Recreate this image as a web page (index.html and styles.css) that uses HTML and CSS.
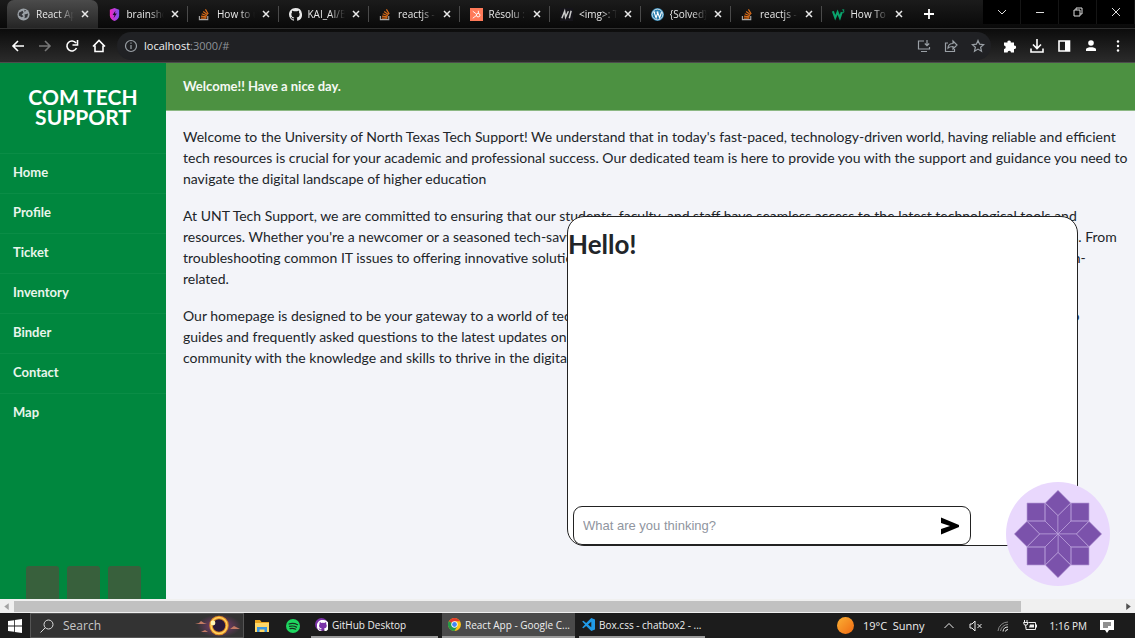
FILE: index.html
```html
<!DOCTYPE html>
<html lang="en">
<head>
<meta charset="utf-8">
<meta name="viewport" content="width=device-width, initial-scale=1">
<title>React App</title>
<link rel="stylesheet" href="styles.css">
</head>
<body>
<svg class="defs" aria-hidden="true">
  <defs>
    <symbol id="stack" viewBox="0 0 14 14"><path d="M1.5 8.500v4h9v-4" fill="none" stroke="#aaa" stroke-width="1.200"/><path d="M3 10.800h6M3.200 8.700l6 .8M4 6.200l5.600 2.100M5.600 3.700l4.700 3.600M8 1.500l3 5" fill="none" stroke="#d96c1a" stroke-width="1.300"/></symbol>
    <symbol id="cat" viewBox="0 0 16 16"><path fill="currentColor" d="M8 0C3.580 0 0 3.580 0 8c0 3.540 2.290 6.530 5.470 7.590.4.070.55-.17.55-.38v-1.490c-2.230.49-2.700-.94-2.700-.94-.36-.92-.89-1.170-.89-1.170-.73-.5.050-.49.050-.49.810.060 1.230.830 1.230.830.720 1.230 1.880.87 2.330.66.070-.52.280-.87.510-1.070-1.780-.2-3.640-.89-3.640-3.950 0-.87.310-1.590.820-2.150-.08-.2-.36-1.020.080-2.120 0 0 .67-.21 2.200.82a7.600 7.600 0 0 1 4 0c1.530-1.040 2.200-.82 2.200-.82.44 1.100.16 1.920.080 2.120.51.560.820 1.270.820 2.150 0 3.070-1.870 3.750-3.650 3.950.29.250.54.730.54 1.480v2.190c0 .21.150.46.550.38A8 8 0 0 0 8 0z"/></symbol>
    <symbol id="x" viewBox="0 0 10 10"><path d="M2 2l6 6M8 2l-6 6" stroke="currentColor" stroke-width="1.500"/></symbol>
  </defs>
</svg>

<header class="browser">
  <div class="tabstrip">
    <div class="tabs">
      <div class="tab active"><svg class="fav" viewBox="0 0 14 14"><circle cx="7" cy="7" r="6.500" fill="#9aa0a6"/><path d="M2 5l4-2 1 2-2 2 2 2-2 1-3-2zM8 7l4-1-1 4-3 1 .5-2zM8 2l2 1-2 1z" fill="#35363a"/></svg><span>React App</span><button aria-label="Close tab"><svg><use href="#x"/></svg></button></div>
      <div class="tab"><svg class="fav" viewBox="0 0 14 14"><defs><linearGradient id="sh"><stop offset="0" stop-color="#f423c4"/><stop offset="1" stop-color="#7b55ee"/></linearGradient></defs><path d="M7 0l5 2v6c0 3-2.500 5-5 6-2.500-1-5-3-5-6V2z" fill="url(#sh)"/><path d="M8 3L5 7.500h2L6 11l3.500-5h-2z" fill="#180d28"/></svg><span>brainshop</span><button aria-label="Close tab"><svg><use href="#x"/></svg></button></div>
      <div class="tab"><svg class="fav"><use href="#stack"/></svg><span>How to use</span><button aria-label="Close tab"><svg><use href="#x"/></svg></button></div>
      <div class="tab"><svg class="fav"><use href="#cat"/></svg><span>KAI_AI/Box</span><button aria-label="Close tab"><svg><use href="#x"/></svg></button></div>
      <div class="tab"><svg class="fav"><use href="#stack"/></svg><span>reactjs - css</span><button aria-label="Close tab"><svg><use href="#x"/></svg></button></div>
      <div class="tab"><svg class="fav" viewBox="0 0 14 14"><path d="M0 0h14v14H0z" fill="#ff7a59"/><g fill="none" stroke="#fff"><path d="M3 3.500l4 3M3 11l4-3M9 3v3"/><circle cx="8.800" cy="7.700" r="1.900"/></g></svg><span>Résolu : css</span><button aria-label="Close tab"><svg><use href="#x"/></svg></button></div>
      <div class="tab"><svg class="fav" viewBox="0 0 14 14"><path d="M0 0h14v14H0z" fill="#15141a"/><path d="M2 11L5 3.500 6 10l3-6.500M10 11l2-8" fill="none" stroke="#ccc" stroke-width="1.600"/></svg><span>&lt;img&gt;: The</span><button aria-label="Close tab"><svg><use href="#x"/></svg></button></div>
      <div class="tab"><svg class="fav" viewBox="0 0 14 14"><circle cx="7" cy="7" r="7" fill="#2b7fae"/><circle cx="7" cy="7" r="5.800" fill="none" stroke="#fff" stroke-width=".8"/><path d="M2.500 4.500h2M3.300 4.500l2.200 6L7.300 5l2 5.500 2-6M6 4.500h2" fill="none" stroke="#fff" stroke-width="1.200"/></svg><span>{Solved} css</span><button aria-label="Close tab"><svg><use href="#x"/></svg></button></div>
      <div class="tab"><svg class="fav"><use href="#stack"/></svg><span>reactjs - css</span><button aria-label="Close tab"><svg><use href="#x"/></svg></button></div>
      <div class="tab"><svg class="fav" viewBox="0 0 14 14"><path d="M1 3.500l2.500 7 2.500-6 2.500 6 2-6" fill="none" stroke="#0aa36c" stroke-width="2.200"/><path d="M11 2h2l-1 1.500c2 0 1 2-1 1.500" fill="none" stroke="#0aa36c"/></svg><span>How To Css</span><button aria-label="Close tab"><svg><use href="#x"/></svg></button></div>
    </div>
    <button class="newtab" aria-label="New tab"><svg viewBox="0 0 12 12"><path d="M6 1v10M1 6h10" stroke="#fff" stroke-width="1.800"/></svg></button>
    <div class="window-buttons">
      <button aria-label="Search tabs"><svg viewBox="0 0 12 12"><path d="M2 4l4 4 4-4"/></svg></button>
      <button aria-label="Minimize"><svg viewBox="0 0 12 12"><path d="M2 6.500h8"/></svg></button>
      <button aria-label="Restore"><svg viewBox="0 0 12 12"><path d="M2 4h6v6H2zM4 4V2h6v6H8"/></svg></button>
      <button aria-label="Close window"><svg viewBox="0 0 12 12"><path d="M2 2l8 8M10 2l-8 8"/></svg></button>
    </div>
  </div>
  <div class="toolbar">
    <div class="nav-buttons">
      <button aria-label="Back"><svg viewBox="0 0 14 14"><path d="M13 7H2M7 2L2 7l5 5"/></svg></button>
      <button aria-label="Forward" class="dim"><svg viewBox="0 0 14 14"><path d="M1 7h11M7 2l5 5-5 5"/></svg></button>
      <button aria-label="Reload"><svg viewBox="0 0 14 14"><path d="M11.500 9A5 5 0 1 1 11 4M12.500 1v5h-5"/></svg></button>
      <button aria-label="Home page"><svg viewBox="0 0 14 14"><path d="M1 7.500L7 1.500l6 6M3 6.500v6h8v-6"/></svg></button>
    </div>
    <div class="address">
      <svg viewBox="0 0 14 14"><circle cx="7" cy="7" r="5.500"/><path d="M7 6v4M7 3.500v1.200"/></svg>
      <input type="text" aria-label="Address" class="sr">
      <span class="url">localhost<i>:3000/#</i></span>
      <div class="address-actions">
        <button aria-label="Install"><svg viewBox="0 0 14 14"><path d="M7 2H1.500v8h11V8M4 12.500h6M10 1v5M7.800 4.500L10 6.700l2.200-2.200"/></svg></button>
        <button aria-label="Share"><svg viewBox="0 0 14 14"><path d="M4 4H1.500v8.500h9V10M4 9c0-3 2-4.500 5-4.500V2l4 4-4 4V7.500C7 7.500 5 8 4 9z"/></svg></button>
        <button aria-label="Bookmark"><svg viewBox="0 0 14 14"><path d="M7 1.500l1.600 3.700 4 .4-3 2.600.9 4L7 10.100l-3.500 2.100.9-4-3-2.600 4-.4z"/></svg></button>
      </div>
    </div>
    <div class="extensions">
      <button aria-label="Extensions"><svg viewBox="0 0 14 14"><path class="solid" d="M1 3.500h3.500a1.700 1.700 0 1 1 3.300 0H11v3.200a1.700 1.700 0 1 1 0 3.300v3.500H8a1.700 1.700 0 0 0-3.400 0H1V10a1.700 1.700 0 0 0 0-3.400z"/></svg></button>
      <button aria-label="Downloads"><svg viewBox="0 0 14 14"><path d="M7 0v9M3 5.500l4 4 4-4M1 9.500V13h12V9.500"/></svg></button>
      <button aria-label="Side panel"><svg viewBox="0 0 14 14"><path d="M2 2h10.500v10H2z"/><path class="solid" d="M8 2h5v10H8z"/></svg></button>
      <button aria-label="Account" class="account"><svg viewBox="0 0 14 14"><circle class="solid" cx="7" cy="4" r="2.800"/><path class="solid" d="M2 12V10c1-2.500 9-2.500 10 0v2z"/></svg></button>
      <button aria-label="Menu"><svg viewBox="0 0 14 14"><circle class="solid" cx="7" cy="2.500" r="1.200"/><circle class="solid" cx="7" cy="7" r="1.200"/><circle class="solid" cx="7" cy="11.500" r="1.200"/></svg></button>
    </div>
  </div>
</header>

<div class="app">
  <aside class="sidebar">
    <h1 class="brand">COM TECH SUPPORT</h1>
    <nav class="menu">
      <a href="#">Home</a><a href="#">Profile</a><a href="#">Ticket</a><a href="#">Inventory</a><a href="#">Binder</a><a href="#">Contact</a><a href="#">Map</a>
    </nav>
    <div class="social"><i></i><i></i><i></i></div>
  </aside>
  <main class="main">
    <div class="banner">Welcome!! Have a nice day.</div>
    <div class="copy">
      <p>Welcome to the University of North Texas Tech Support! We understand that in today's fast-paced, technology-driven world, having reliable and efficient<br>tech resources is crucial for your academic and professional success. Our dedicated team is here to provide you with the support and guidance you need to<br>navigate the digital landscape of higher education</p>
      <p>At UNT Tech Support, we are committed to ensuring that our students, faculty, and staff have seamless access to the latest technological tools and<br>resources. Whether you're a newcomer or a seasoned tech-savvy individual, our knowledgeable team is here to help with all your computing needs. From<br>troubleshooting common IT issues to offering innovative solutions, we are your trusted partners on campus and your go-to resource for things tech-<br>related.</p>
      <p>Our homepage is designed to be your gateway to a world of technology resources, support, and services for your campus community. From how-to<br>guides and frequently asked questions to the latest updates on campus technology, we are here to empower the<br>community with the knowledge and skills to thrive in the digital age.</p>
    </div>
  </main>
  <section class="chat" aria-label="Chat">
    <h2>Hello!</h2>
    <form class="ask">
      <input type="text" aria-label="Message" placeholder="What are you thinking?">
      <button type="button" aria-label="Send"><svg viewBox="0 0 20 18"><path d="M1 .5l18 7.500v2L1 17.500v-5.500l9-3-9-3z"/></svg></button>
    </form>
  </section>
  <button class="chat-toggle" aria-label="Toggle chat">
    <svg viewBox="-156 -156 312 312">
      <defs><g id="petal"><path d="M-39-39h-54v-54h54zM0-55l-38-38L0-131l38 38zM0 0l-55 0-38-39h54zM0 0l-39-39v-54L0-55z"/></g></defs>
      <use href="#petal"/><use href="#petal" transform="rotate(90)"/><use href="#petal" transform="rotate(180)"/><use href="#petal" transform="rotate(270)"/>
    </svg>
  </button>
</div>

<div class="scrollbar">
  <svg viewBox="0 0 8 8"><path d="M6 1v6L2 4z" fill="#a3a3a3"/></svg>
  <div class="track"><div class="thumb"></div></div>
  <svg viewBox="0 0 8 8"><path d="M2 1v6l4-3z" fill="#505050"/></svg>
</div>

<footer class="taskbar">
  <button class="start" aria-label="Start"><svg viewBox="0 0 14 14"><path d="M0 2l6-.8v5.400H0zM6.800 1L14 0v6.600H6.800zM0 7.400h6v5.400L0 12zM6.800 7.400H14V14l-7.200-1z" fill="#fff"/></svg></button>
  <label class="search">
    <svg class="lens" viewBox="0 0 14 14"><circle cx="8.500" cy="5.500" r="4.500"/><path d="M5.300 8.700L.5 13.500"/></svg>
    <input type="text" placeholder="Search" aria-label="Search">
    <svg class="eclipse" viewBox="0 0 48 23"><defs><radialGradient id="glow"><stop offset="0" stop-color="#8c3d7c"/><stop offset="1" stop-color="#8c3d7c" stop-opacity="0"/></radialGradient></defs><ellipse cx="26" cy="12" rx="22" ry="11.500" fill="url(#glow)"/><circle cx="26" cy="11.500" r="8" fill="#291839" stroke="#e08a28" stroke-width="3.500"/><circle cx="26" cy="11.500" r="8" fill="none" stroke="#ffd45e" stroke-width="1.400"/><circle cx="20" cy="9" r="2.400" fill="#fff3b5"/><path d="M2 10l4-1 2-2 3 2 3 1zM37 15l4-3 2 1 4 2zM8 18l4-2 3 2z" fill="#c47a64"/></svg>
  </label>
  <button class="pin" aria-label="File Explorer"><svg viewBox="0 0 14 14"><path d="M0 1h5l1.500 2H14v10H0z" fill="#e9a520"/><path d="M0 4h14v9H0z" fill="#ffd868"/><path d="M2 8h10v5H9.500v-2.500h-5V13H2z" fill="#3b97e0"/></svg></button>
  <button class="pin" aria-label="Spotify"><svg viewBox="0 0 14 14"><circle cx="7" cy="7" r="7" fill="#1ed760"/><path d="M3 5c3-1 6-.6 8.500.7M3.500 7.400c2.500-.7 5-.4 7 .7M4 9.600c2-.5 4-.3 5.700.6" fill="none" stroke="#17301f" stroke-width="1.200" stroke-linecap="round"/></svg></button>
  <button class="task"><svg viewBox="0 0 14 14"><circle cx="7" cy="7" r="7" fill="#7a32a8"/><svg x="2" y="2" width="10" height="10" color="#fff"><use href="#cat"/></svg></svg><span>GitHub Desktop</span></button>
  <button class="task current"><svg viewBox="0 0 14 14"><circle cx="7" cy="7" r="7" fill="#fbc116"/><path d="M7 7L.9 3.500A7 7 0 0 1 13 3.500H7z" fill="#e33b2e"/><path d="M.9 3.500A7 7 0 0 0 7 14l3-5.200L7 7z" fill="#229a4a"/><circle cx="7" cy="7" r="3.400" fill="#fff"/><circle cx="7" cy="7" r="2.600" fill="#4285f4"/></svg><span>React App - Google C...</span></button>
  <button class="task"><svg viewBox="0 0 14 14"><path d="M10 0l4 1.700v10.600L10 14 4.500 8.700 1.500 11 .2 10.300 3.300 7 .2 3.700 1.500 3l3 2.300zM10 4L6.500 7l3.500 3z" fill="#219be8" fill-rule="evenodd"/></svg><span>Box.css - chatbox2 - ...</span></button>
  <div class="tray">
    <svg class="sun" viewBox="0 0 16 16"><defs><linearGradient id="sun" x2="1" y2="1"><stop offset="0" stop-color="#fbb034"/><stop offset="1" stop-color="#f06a12"/></linearGradient></defs><circle cx="8" cy="8" r="8" fill="url(#sun)"/></svg>
    <span class="weather">19°C&nbsp; Sunny</span>
    <svg viewBox="0 0 14 14"><path d="M2.500 9L7 4.500 11.500 9"/></svg>
    <svg viewBox="0 0 14 14"><path d="M1 5h2l3-3v10L3 9H1zM8.500 5l4 4M12.500 5l-4 4"/></svg>
    <svg viewBox="0 0 14 14"><g stroke="#888"><path d="M2 12A10 10 0 0 1 12 3M4.500 12A7.500 7.500 0 0 1 12 5.500"/></g><path d="M7 12.500A5 5 0 0 1 12 8M9.500 12.500A2.500 2.500 0 0 1 12 10.500"/></svg>
    <svg viewBox="0 0 14 14"><path d="M5.500 3.500h7v7H3V8M1.500 1v2M4 1v2M.5 3.500h4.500L4 6H1.500zM2.700 6v2.500M13.500 5.500v3"/><path d="M7 5.500h4v3H6z" fill="#eee" stroke="none"/></svg>
    <time>1:16 PM</time>
    <svg viewBox="0 0 14 14"><path d="M0 1h14v10H9l-2 3-2-3H0z" fill="#fff" stroke="none"/><path d="M3 4h8M3 6h8M3 8h5" stroke="#222"/></svg>
  </div>
</footer>
</body>
</html>
```
FILE: styles.css
```css
* { box-sizing: border-box; }
html, body { height: 100%; }
body {
  margin: 0;
  display: flex;
  flex-direction: column;
  overflow: hidden;
  background: #f3f4f9;
  font-family: Lato, "Liberation Sans", sans-serif;
}
button { margin: 0; padding: 0; border: 0; background: none; color: inherit; font: inherit; }
svg { flex: none; }
.defs { position: absolute; width: 0; height: 0; }

/* Browser chrome */
.browser { flex: none; background: #111; color: #e8e8e8; font-family: "Open Sans", sans-serif; font-size: 10px; }
.tabstrip { display: flex; height: 28px; background: linear-gradient(#1b1b1b, #090909); }
.tabs { flex: 0 1 912px; min-width: 0; padding-left: 7px; display: grid; grid-template-columns: repeat(10, minmax(0, 1fr)); }
.tab { display: flex; align-items: center; gap: 6px; padding: 0 8px 0 10px; min-width: 0; position: relative; }
.tab:not(.active)::after { content: ""; position: absolute; right: 0; top: 6px; height: 16px; width: 1px; background: #4a4a4a; }
.tab:last-child::after { display: none; }
.tab.active { border-radius: 7px 7px 0 0; background: linear-gradient(#4b4b4b, #252525); }
.tab span {
  flex: 1;
  min-width: 0;
  overflow: hidden;
  white-space: nowrap;
  -webkit-mask-image: linear-gradient(90deg, #000 60%, transparent);
  mask-image: linear-gradient(90deg, #000 60%, transparent);
}
.fav { width: 13px; height: 13px; }
.tab button { display: flex; }
.tab button svg { width: 10px; height: 10px; }
.newtab { width: 34px; display: grid; place-items: center; }
.newtab svg { width: 12px; height: 12px; }
.window-buttons { margin-left: auto; display: flex; height: 24px; background: #000; }
.window-buttons button { width: 38px; display: grid; place-items: center; border-right: 1px solid #151515; }
.window-buttons svg { width: 12px; height: 12px; fill: none; stroke: #ddd; }
.toolbar {
  display: flex;
  align-items: center;
  height: 35px;
  padding: 0 4px;
  border-top: 1px solid #303030;
  border-bottom: 1px solid #4c4c4c;
  background: linear-gradient(#0c0c0c, #2b2b2b);
}
.toolbar svg { width: 14px; height: 14px; fill: none; stroke: currentColor; stroke-width: 1.6; }
.toolbar .solid { fill: currentColor; stroke: none; }
.toolbar button { display: grid; place-items: center; }
.nav-buttons { display: flex; }
.nav-buttons button { width: 27px; color: #fff; }
.nav-buttons .dim { color: #777; }
.address { flex: 1; display: flex; align-items: center; gap: 6px; height: 28px; margin-left: 5px; padding: 0 0 0 7px; border-radius: 14px; background: #202124; color: #9aa0a6; position: relative; }
.address > svg, .address-actions svg { stroke-width: 1.2; }
.url { font-size: 11px; color: #f1f1f1; }
.url i { font-style: normal; color: #8e9297; }
.sr { position: absolute; inset: 0; width: 100%; opacity: 0; border: 0; }
.address-actions { margin-left: auto; display: flex; }
.address-actions button { width: 27px; }
.extensions { display: flex; padding-left: 5px; color: #fff; }
.extensions button { width: 27px; }

/* Page */
.app { flex: 1; min-height: 0; display: flex; position: relative; overflow: hidden; }
.sidebar { flex: none; width: 166px; display: flex; flex-direction: column; background: #00873e; color: #fff; }
.brand { height: 90px; margin: 0; padding: 24px 20px 0; font-size: 21px; line-height: 20px; font-weight: 700; text-align: center; }
.menu { display: flex; flex-direction: column; }
.menu a { height: 40px; padding: 0 13px; border-top: 1px solid #0a8d46; color: #e9f5ec; font-size: 13px; line-height: 37px; font-weight: 700; text-decoration: none; }
.social { margin-top: auto; display: flex; justify-content: center; gap: 8px; }
.social i { width: 33px; height: 33px; border-radius: 3px 3px 0 0; background: #38603c; }
.main { flex: 1; min-width: 0; }
.banner { height: 48px; padding: 0 17px; background: #4c9141; border-bottom: 1px solid #8cb884; color: #f5f9f3; font-size: 13px; line-height: 47px; font-weight: 700; }
.copy { display: flex; flex-direction: column; gap: 16px; padding: 15px 0 16px 17px; color: #212529; font-size: 14px; line-height: 21px; white-space: nowrap; }
.copy p { margin: 0; }
.chat {
  position: absolute;
  right: 57px;
  bottom: 53px;
  width: 511px;
  height: 330px;
  display: flex;
  flex-direction: column;
  justify-content: space-between;
  border: 1px solid #222;
  border-radius: 17px;
  background: #fff;
}
.chat h2 { margin: 0; padding-top: 10px; color: #212529; font-size: 26px; line-height: 34px; font-weight: 700; }
.ask { display: flex; align-items: center; width: 398px; height: 39px; margin-left: 5px; padding: 0 10px 0 9px; border: 1px solid #222; border-radius: 9px; background: #fff; }
.ask input { flex: 1; min-width: 0; padding: 0; border: 0; outline: 0; background: none; font: 13px "Liberation Sans", sans-serif; }
.ask input::placeholder { color: #9095a0; opacity: 1; }
.ask svg { display: block; width: 20px; height: 18px; }
.chat-toggle { position: absolute; right: 25px; bottom: 13px; width: 104px; height: 104px; border-radius: 50%; background: #e9d8fd; }
.chat-toggle svg { display: block; width: 104px; height: 104px; fill: #7b52ab; stroke: #b79bd8; stroke-width: 2; }

/* Horizontal scrollbar */
.scrollbar { flex: none; height: 14px; display: flex; align-items: center; padding: 0 2px; background: #f0f0f0; }
.scrollbar svg { width: 9px; height: 9px; }
.track { flex: 1; padding: 0 3px; }
.thumb { width: 91%; height: 11px; background: #c1c1c1; }

/* Taskbar */
.taskbar { flex: none; height: 25px; display: flex; align-items: stretch; background: #1c1c1c; color: #eee; font-family: "Open Sans", sans-serif; font-size: 10px; }
.taskbar svg { width: 14px; height: 14px; }
.start { width: 30px; display: grid; place-items: center; }
.search { width: 214px; display: flex; align-items: center; gap: 9px; padding: 0 2px 0 9px; border: 1px solid #555; background: #333; }
.search .lens { fill: none; stroke: #ddd; }
.search input { flex: 1; min-width: 0; padding: 0; border: 0; background: none; font: 12px "Open Sans", sans-serif; }
.search input::placeholder { color: #c8c8c8; opacity: 1; }
.search .eclipse { width: 48px; height: 23px; }
.pin { width: 31px; display: grid; place-items: center; }
.task { width: 133px; display: flex; align-items: center; gap: 4px; padding: 0 6px; border-bottom: 2px solid #9b9b9b; white-space: nowrap; }
.task svg { width: 13px; height: 13px; }
.search + .pin { margin-left: 2px; }
.pin + .task { margin-left: 3px; width: 127px; padding-left: 4px; }
.current { margin: 0 4px; background: #4a4a4a; }
.current + .task { width: 126px; padding: 0 3px; }
.tray { margin-left: auto; display: flex; align-items: center; gap: 13px; padding-right: 21px; }
.tray svg { fill: none; stroke: #eee; }
.tray .sun { width: 17px; height: 17px; stroke: none; }
.weather { margin: 0 4px 0 -4px; font-size: 11px; }
```
